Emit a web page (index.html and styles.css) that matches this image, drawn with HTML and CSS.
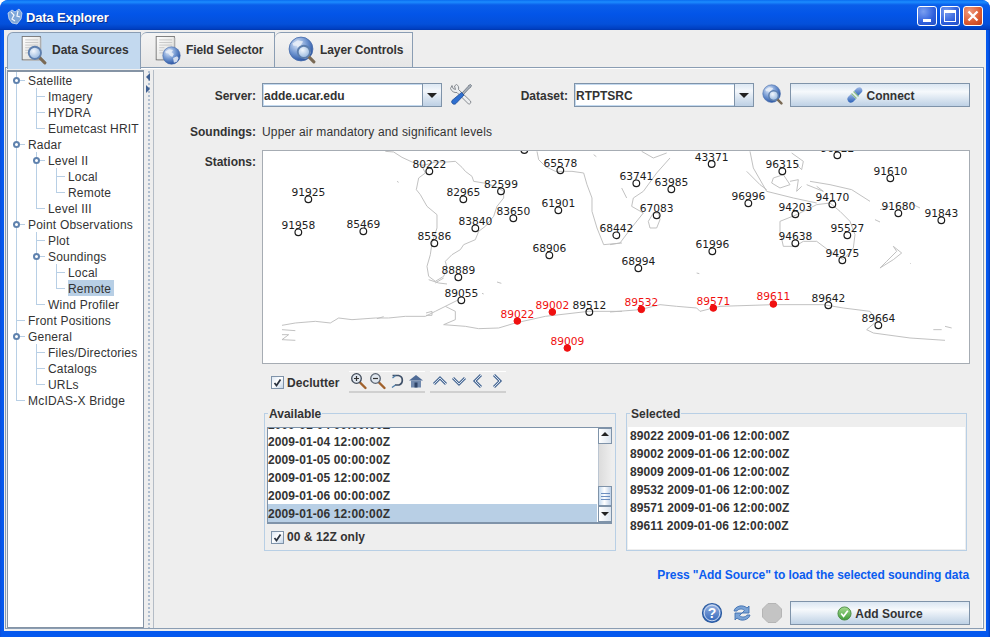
FILE: index.html
```html
<!DOCTYPE html>
<html lang="en">
<head>
<meta charset="utf-8">
<title>Data Explorer</title>
<link rel="stylesheet" href="styles.css">
</head>
<body>
<svg class="defs" width="0" height="0" aria-hidden="true">
  <defs>
    <radialGradient id="globe" cx="35%" cy="30%" r="75%">
      <stop offset="0" stop-color="#dfeafa"/><stop offset=".55" stop-color="#6d93cf"/><stop offset="1" stop-color="#244f9e"/>
    </radialGradient>
    <radialGradient id="lens" cx="40%" cy="35%" r="70%">
      <stop offset="0" stop-color="#f2f7fd"/><stop offset="1" stop-color="#8fb2dc"/>
    </radialGradient>
    <linearGradient id="paper" x1="0" y1="0" x2="1" y2="1">
      <stop offset="0" stop-color="#ffffff"/><stop offset="1" stop-color="#d8d8d4"/>
    </linearGradient>
    <linearGradient id="blueBtn" x1="0" y1="0" x2="0" y2="1">
      <stop offset="0" stop-color="#9db7e4"/><stop offset="1" stop-color="#2c62b8"/>
    </linearGradient>
    <linearGradient id="greenBtn" x1="0" y1="0" x2="0" y2="1">
      <stop offset="0" stop-color="#a7dc91"/><stop offset="1" stop-color="#3f9c3a"/>
    </linearGradient>
    <symbol id="i-doc" viewBox="0 0 30 32">
      <rect x="2.5" y="1.5" width="21" height="27" fill="url(#paper)" stroke="#6f6f6f"/>
      <path d="M24 3v26H4" fill="none" stroke="#b9b9b9" stroke-width="1.4"/>
      <path d="M6 5.5h15M6 8.500h15M6 11.500h15M6 14.500h6M6 17.500h5M6 20.500h5" stroke="#c4c4c4"/>
    </symbol>
    <symbol id="i-glass" viewBox="0 0 14 14">
      <path d="M8.500 8.500l4 4" stroke="#7a6a55" stroke-width="2.200" stroke-linecap="round"/>
      <circle cx="5.500" cy="5.500" r="4.300" fill="url(#lens)" stroke="#5d7fae" stroke-width="1.300"/>
    </symbol>
    <symbol id="i-globe" viewBox="0 0 24 24">
      <circle cx="12" cy="12" r="11" fill="url(#globe)" stroke="#4a6fae" stroke-width=".8"/>
      <path d="M4 7l5-3 5 1-2 3 3 2-2 4-3-2-2-3-3 0zM14 15l5-2 2 2-2 5-4 1z" fill="#e9eff8" opacity=".85"/>
    </symbol>
    <symbol id="i-chev-up" viewBox="0 0 18 18"><path class="chev-o" d="M3 12l6-6 6 6"/><path class="chev-i" d="M3 12l6-6 6 6"/></symbol>
    <symbol id="i-chev-down" viewBox="0 0 18 18"><path class="chev-o" d="M3 6l6 6 6-6"/><path class="chev-i" d="M3 6l6 6 6-6"/></symbol>
    <symbol id="i-chev-left" viewBox="0 0 18 18"><path class="chev-o" d="M12 3L6 9l6 6"/><path class="chev-i" d="M12 3L6 9l6 6"/></symbol>
    <symbol id="i-chev-right" viewBox="0 0 18 18"><path class="chev-o" d="M6 3l6 6-6 6"/><path class="chev-i" d="M6 3l6 6-6 6"/></symbol>
  </defs>
</svg>

<div class="window">
  <header class="titlebar">
    <svg class="app-icon" viewBox="0 0 18 18" width="18" height="18" aria-hidden="true">
      <path d="M2 5l4-3 3 2 4-3 3 4-1 6-4 5-5-1-3-4z" fill="#7ea6d8" stroke="#dfe9f7" stroke-width=".7"/>
      <path d="M5 4l3 3-2 4 3 2M12 3l-1 5 3 1" fill="none" stroke="#f4f7fc" stroke-width="1.200"/>
    </svg>
    <span class="title-text">Data Explorer</span>
    <div class="win-btns">
      <span class="win-btn"><i class="glyph-min"></i></span>
      <span class="win-btn"><i class="glyph-max"></i></span>
      <span class="win-btn close">
        <svg viewBox="0 0 12 12" width="12" height="12" aria-hidden="true"><path d="M1.500 1.500l9 9M10.500 1.500l-9 9" stroke="#fff" stroke-width="2.300"/></svg>
      </span>
    </div>
  </header>

  <div class="client">
    <nav class="tabs">
      <div class="tab active">
        <svg class="tab-icon" viewBox="0 0 28 30" width="28" height="30" aria-hidden="true">
          <use href="#i-doc" x="0" y="0" width="26" height="28"/>
          <use href="#i-glass" x="7" y="10" width="20" height="20"/>
        </svg>
        <span>Data Sources</span>
      </div>
      <div class="tab">
        <svg class="tab-icon" viewBox="0 0 28 30" width="28" height="30" aria-hidden="true">
          <use href="#i-doc" x="0" y="0" width="26" height="28"/>
          <use href="#i-globe" x="8" y="11" width="19" height="19"/>
        </svg>
        <span>Field Selector</span>
      </div>
      <div class="tab wide">
        <svg class="tab-icon" viewBox="0 0 28 30" width="28" height="30" aria-hidden="true">
          <use href="#i-globe" x="0" y="1" width="26" height="26"/>
          <use href="#i-glass" x="8" y="9" width="20" height="20"/>
        </svg>
        <span>Layer Controls</span>
      </div>
    </nav>

    <div class="tab-pane">
      <aside class="tree">
        <ul class="tree-root">
          <li class="open"><span class="node">Satellite</span>
            <ul>
              <li><span class="node">Imagery</span></li>
              <li><span class="node">HYDRA</span></li>
              <li><span class="node">Eumetcast HRIT</span></li>
            </ul>
          </li>
          <li class="open"><span class="node">Radar</span>
            <ul>
              <li class="open"><span class="node">Level II</span>
                <ul>
                  <li><span class="node">Local</span></li>
                  <li><span class="node">Remote</span></li>
                </ul>
              </li>
              <li><span class="node">Level III</span></li>
            </ul>
          </li>
          <li class="open"><span class="node">Point Observations</span>
            <ul>
              <li><span class="node">Plot</span></li>
              <li class="open"><span class="node">Soundings</span>
                <ul>
                  <li><span class="node">Local</span></li>
                  <li><span class="node selected">Remote</span></li>
                </ul>
              </li>
              <li><span class="node">Wind Profiler</span></li>
            </ul>
          </li>
          <li><span class="node">Front Positions</span></li>
          <li class="open"><span class="node">General</span>
            <ul>
              <li><span class="node">Files/Directories</span></li>
              <li><span class="node">Catalogs</span></li>
              <li><span class="node">URLs</span></li>
            </ul>
          </li>
          <li><span class="node">McIDAS-X Bridge</span></li>
        </ul>
      </aside>

      <div class="splitter">
        <i class="tri-left"></i>
        <i class="tri-right"></i>
      </div>

      <main class="panel">
        <div class="row-top">
          <label class="label">Server:</label>
          <div class="combo"><span class="combo-text">adde.ucar.edu</span><span class="combo-arrow"></span></div>
          <svg class="ic-wrench" viewBox="0 0 23 24" width="23" height="24" aria-hidden="true">
            <path d="M1.500 5.500L3 2.500l1 3 2.500 1L5.500 3l2-1.500c2 1 2.500 3 2 5L21.500 18c1 1.500-.5 3.500-2 3L8 9.500c-2.500.5-5.500-1-6.500-4z" fill="#eceef0" stroke="#7a7f86" stroke-width=".9"/>
            <path d="M21.500 1.500l1 1-1 2-1 .5L14 12l-1.500-1.500L19 3.500l.5-1z" fill="#aab2bc" stroke="#5a6470" stroke-width=".7"/>
            <path d="M12.500 9.500l2.500 2.500-8 8.500c-2 2-5.500-.5-4-3z" fill="#2f6fd0" stroke="#1d4b94" stroke-width=".8"/>
          </svg>
          <label class="label label-dataset">Dataset:</label>
          <div class="combo"><span class="combo-text">RTPTSRC</span><span class="combo-arrow"></span></div>
          <svg class="ic-search" viewBox="0 0 24 24" width="22" height="22" aria-hidden="true">
            <use href="#i-globe" x="0" y="0" width="21" height="21"/>
            <use href="#i-glass" x="6" y="6" width="17" height="17"/>
          </svg>
          <button class="btn btn-connect" type="button">
            <svg viewBox="0 0 18 18" width="18" height="18" aria-hidden="true">
              <path d="M2 11l3-3 5 5-3 3c-2 1-4 1-5-1s-1-2 0-4z" fill="url(#blueBtn)"/>
              <path d="M8 5l3-3c2-1 4-1 5 1s0 3-1 4l-3 3z" fill="url(#blueBtn)"/>
              <path d="M5.500 7.500l5 5M7.500 5.500l5 5" stroke="#8fbf8a" stroke-width="1.200"/>
            </svg>
            <span>Connect</span>
          </button>
        </div>

        <div class="row-text">
          <span class="label">Soundings:</span>
          <span class="plain">Upper air mandatory and significant levels</span>
        </div>

        <div class="row-map">
          <span class="label label-top">Stations:</span>
          <div class="map">
            <svg viewBox="263 151 706 212" width="706" height="212" aria-label="Station map">
              <g transform="translate(262 148) scale(.33333)">
                <path class="coast" d="M370 10L395 12L420 28L450 42L480 52L500 48L520 42L555 42L580 40L600 58L610 70L630 85L635 100L665 105L700 115L725 130L725 150L705 175L695 205L670 235L650 250L640 275L605 290L595 305L570 320L550 340L555 360L545 385L520 400L500 385L495 355L505 320L510 285L525 240L525 200L495 175L475 140L463 125L470 90L490 75L480 55"/>
                <path class="coast" d="M500 395L530 405L555 408M545 390L520 405"/>
                <path class="coast" d="M60 532L100 525L160 520L205 525L230 510L270 515L340 510L380 510L430 505L490 505L520 490L550 475L590 455M550 475L580 490L580 515L545 530L610 535L650 542L710 540L760 525L850 505L980 490L1080 490"/>
                <path class="coast" d="M60 545L100 548M60 560L80 560L60 575L100 577M492 495L510 490L510 502L492 502M345 512L365 506"/>
                <path class="coast" d="M825 10L830 35L850 55L880 70L930 70L965 75L975 110L990 150L990 190L1005 240L1025 290L1080 285"/>
                <path class="coast" d="M995 20L1003 26M705 402L718 406M405 100L410 103M660 436L665 438"/>
              </g>
              <g transform="translate(610 148) scale(.33333)">
                <path class="coast" d="M95 10L130 30L170 15M180 30L140 75L100 130L70 150L65 175L100 195L60 245L30 285L0 290"/>
                <path class="coast" d="M130 195L145 195L150 215L140 240L120 240L115 220ZM35 120L50 150"/>
                <path class="coast" d="M420 10L430 60L470 130L550 150L620 165M410 70L450 110L470 125M490 90L520 80L540 110L510 120L485 105ZM540 100L565 95L560 130L575 115M545 15L580 40L575 65L550 40M600 100L660 110L725 125L780 160M590 110L640 130L620 115"/>
                <path class="coast" d="M510 220L560 200L620 170L660 165L690 190L720 220L735 260L730 300L700 335L660 310L620 280L580 280L555 295L520 295L510 250Z"/>
                <path class="coast" d="M850 295L875 315L850 335L810 360L830 340L860 310ZM795 215L810 222M810 185L840 175M900 165L930 180M260 375L268 377M900 345L902 347"/>
                <path class="coast" d="M0 492L90 485L150 470L200 475L260 480L270 490L330 475L490 470L640 470L700 480L780 490L800 520L770 545L790 555L900 570L1005 577M970 545L995 545M1005 535L1025 540"/>
              </g>
              <g class="stations" transform="translate(262 148) scale(.33333)">
                <circle cx="787" cy="6" r="10"/>
                <circle cx="502" cy="70" r="10"/><text x="502" y="60">80222</text>
                <circle cx="895" cy="67" r="10"/><text x="895" y="57">65578</text>
                <circle cx="139" cy="154" r="10"/><text x="139" y="144">91925</text>
                <circle cx="604" cy="154" r="10"/><text x="604" y="144">82965</text>
                <circle cx="717" cy="130" r="10"/><text x="717" y="119">82599</text>
                <circle cx="889" cy="187" r="10"/><text x="889" y="176">61901</text>
                <circle cx="754" cy="211" r="10"/><text x="754" y="200">83650</text>
                <circle cx="640" cy="241" r="10"/><text x="640" y="230">83840</text>
                <circle cx="109" cy="253" r="10"/><text x="109" y="243">91958</text>
                <circle cx="304" cy="250" r="10"/><text x="304" y="239">85469</text>
                <circle cx="517" cy="286" r="10"/><text x="517" y="275">85586</text>
                <circle cx="862" cy="322" r="10"/><text x="862" y="311">68906</text>
                <circle cx="589" cy="388" r="10"/><text x="589" y="377">88889</text>
                <circle cx="598" cy="457" r="10"/><text x="598" y="446">89055</text>
                <circle cx="982" cy="492" r="10"/><text x="982" y="482">89512</text>
              </g>
              <g class="stations" transform="translate(610 148) scale(.33333)">
                <circle cx="682" cy="22" r="10"/><text x="682" y="12">96522</text>
                <circle cx="305" cy="48" r="10"/><text x="305" y="39">43371</text>
                <circle cx="79" cy="106" r="10"/><text x="79" y="96">63741</text>
                <circle cx="184" cy="124" r="10"/><text x="184" y="114">63985</text>
                <circle cx="517" cy="70" r="10"/><text x="517" y="59">96315</text>
                <circle cx="841" cy="91" r="10"/><text x="841" y="80">91610</text>
                <circle cx="415" cy="166" r="10"/><text x="415" y="156">96996</text>
                <circle cx="667" cy="169" r="10"/><text x="667" y="159">94170</text>
                <circle cx="556" cy="199" r="10"/><text x="556" y="188">94203</text>
                <circle cx="865" cy="196" r="10"/><text x="865" y="186">91680</text>
                <circle cx="994" cy="217" r="10"/><text x="994" y="206">91843</text>
                <circle cx="140" cy="202" r="10"/><text x="140" y="191">67083</text>
                <circle cx="19" cy="262" r="10"/><text x="19" y="251">68442</text>
                <circle cx="712" cy="262" r="10"/><text x="712" y="251">95527</text>
                <circle cx="556" cy="286" r="10"/><text x="556" y="275">94638</text>
                <circle cx="307" cy="310" r="10"/><text x="307" y="299">61996</text>
                <circle cx="697" cy="337" r="10"/><text x="697" y="326">94975</text>
                <circle cx="85" cy="361" r="10"/><text x="85" y="350">68994</text>
                <circle cx="655" cy="472" r="10"/><text x="655" y="461">89642</text>
                <circle cx="805" cy="532" r="10"/><text x="805" y="521">89664</text>
              </g>
              <g class="stations picked" transform="translate(262 148) scale(.33333)">
                <circle cx="871" cy="492" r="10"/><text x="871" y="482">89002</text>
                <circle cx="766" cy="519" r="10"/><text x="766" y="509">89022</text>
                <circle cx="916" cy="600" r="10"/><text x="916" y="590">89009</text>
              </g>
              <g class="stations picked" transform="translate(610 148) scale(.33333)">
                <circle cx="94" cy="484" r="10"/><text x="94" y="473">89532</text>
                <circle cx="310" cy="480" r="10"/><text x="310" y="470">89571</text>
                <circle cx="490" cy="468" r="10"/><text x="490" y="457">89611</text>
              </g>
            </svg>
          </div>
        </div>

        <div class="lower">
          <div class="row-tools">
            <label class="check">
              <span class="box"><svg viewBox="0 0 11 11" width="11" height="11" aria-hidden="true"><path d="M2.500 6l2 2.500L8.500 2.500" fill="none" stroke="#2c3440" stroke-width="1.800"/></svg></span>
              <span class="check-text">Declutter</span>
            </label>
            <div class="toolgroup">
              <span class="tool"><svg viewBox="0 0 18 18" width="18" height="18" aria-hidden="true"><path d="M9.500 10l6 6" stroke="#a0612c" stroke-width="2.400" stroke-linecap="round"/><circle cx="6.500" cy="6.500" r="4.800" fill="#dfe6ee" stroke="#404a58" stroke-width="1.300"/><path d="M4 6.500h5M6.500 4v5" stroke="#333" stroke-width="1.200"/></svg></span>
              <span class="tool"><svg viewBox="0 0 18 18" width="18" height="18" aria-hidden="true"><path d="M9.500 10l6 6" stroke="#a0612c" stroke-width="2.400" stroke-linecap="round"/><circle cx="6.500" cy="6.500" r="4.800" fill="#dfe6ee" stroke="#5a6472" stroke-width="1.300"/><path d="M4 6.500h5" stroke="#333" stroke-width="1.200"/></svg></span>
              <span class="tool"><svg viewBox="0 0 18 18" width="18" height="18" aria-hidden="true"><path d="M4.500 3.500h6c5 1 5 8 .5 9.500H7" fill="none" stroke="#3f5068" stroke-width="1.700"/><path d="M7.500 3.500L4.500 6M7.500 13L4 15.500" fill="none" stroke="#4f7ea8" stroke-width="1.400"/></svg></span>
              <span class="tool"><svg viewBox="0 0 18 18" width="18" height="18" aria-hidden="true"><path d="M2 8.500L9 3l7 5.500z" fill="#4f6b96"/><rect x="4" y="8.500" width="10" height="7" fill="#7189ad"/><rect x="7.500" y="10.500" width="3" height="5" fill="#2f4468"/></svg></span>
            </div>
            <div class="toolgroup">
              <span class="tool"><svg width="18" height="18" aria-hidden="true"><use href="#i-chev-up"/></svg></span>
              <span class="tool"><svg width="18" height="18" aria-hidden="true"><use href="#i-chev-down"/></svg></span>
              <span class="tool"><svg width="18" height="18" aria-hidden="true"><use href="#i-chev-left"/></svg></span>
              <span class="tool"><svg width="18" height="18" aria-hidden="true"><use href="#i-chev-right"/></svg></span>
            </div>
          </div>

          <div class="groups">
            <section class="group group-avail">
              <span class="legend">Available</span>
              <div class="listwrap">
                <div class="list">
                  <div class="list-row">2009-01-04 00:00:00Z</div>
                  <div class="list-row">2009-01-04 12:00:00Z</div>
                  <div class="list-row">2009-01-05 00:00:00Z</div>
                  <div class="list-row">2009-01-05 12:00:00Z</div>
                  <div class="list-row">2009-01-06 00:00:00Z</div>
                  <div class="list-row selected">2009-01-06 12:00:00Z</div>
                </div>
                <div class="scrollbar">
                  <span class="sb-btn"><i class="arrow-up"></i></span>
                  <span class="sb-track"></span>
                  <span class="sb-thumb"><i></i></span>
                  <span class="sb-btn"><i class="arrow-down"></i></span>
                </div>
              </div>
              <label class="check check-only">
                <span class="box"><svg viewBox="0 0 11 11" width="11" height="11" aria-hidden="true"><path d="M2.500 6l2 2.500L8.500 2.500" fill="none" stroke="#2c3440" stroke-width="1.800"/></svg></span>
                <span class="check-text">00 &amp; 12Z only</span>
              </label>
            </section>
            <section class="group group-sel">
              <span class="legend">Selected</span>
              <div class="sel-list">
                <div class="list-row">89022 2009-01-06 12:00:00Z</div>
                <div class="list-row">89002 2009-01-06 12:00:00Z</div>
                <div class="list-row">89009 2009-01-06 12:00:00Z</div>
                <div class="list-row">89532 2009-01-06 12:00:00Z</div>
                <div class="list-row">89571 2009-01-06 12:00:00Z</div>
                <div class="list-row">89611 2009-01-06 12:00:00Z</div>
              </div>
            </section>
          </div>

          <p class="hint">Press "Add Source" to load the selected sounding data</p>

          <div class="row-bottom">
            <svg class="round-ic" viewBox="0 0 22 22" width="22" height="22" aria-hidden="true">
              <circle cx="11" cy="11" r="9.500" fill="url(#blueBtn)" stroke="#2a5a9f" stroke-width="1.200"/>
              <circle cx="11" cy="11" r="7.800" fill="none" stroke="#d5e1f3" stroke-width=".9"/>
              <text class="q-mark" x="11" y="15.500">?</text>
            </svg>
            <svg class="round-ic" viewBox="0 0 22 22" width="22" height="22" aria-hidden="true">
              <path d="M3 9c1-5 9-7 13-3l2-2v7h-7l2.500-2.500C11 6 7 7 6 9z" fill="#7aa3d6" stroke="#3f6fb0" stroke-width=".9"/>
              <path d="M19 13c-1 5-9 7-13 3l-2 2v-7h7l-2.500 2.500c2.500 2.500 6.500 1.500 7.500-.5z" fill="#7aa3d6" stroke="#3f6fb0" stroke-width=".9"/>
            </svg>
            <svg class="round-ic" viewBox="0 0 22 22" width="22" height="22" aria-hidden="true">
              <path d="M7 1.500h8L20.500 7v8L15 20.500H7L1.500 15V7z" fill="#c4c4c4" stroke="#b5b5b5"/>
            </svg>
            <button class="btn btn-add" type="button">
              <svg viewBox="0 0 16 16" width="15" height="15" aria-hidden="true">
                <circle cx="8" cy="8" r="7" fill="url(#greenBtn)" stroke="#4d8d47"/>
                <path d="M4.500 8l2.500 3L11.500 5" fill="none" stroke="#fff" stroke-width="1.800"/>
              </svg>
              <span>Add Source</span>
            </button>
          </div>
        </div>
      </main>
    </div>
  </div>
</div>
</body>
</html>
```

FILE: styles.css
```css
* { box-sizing: border-box; }
html, body { margin: 0; padding: 0; background: #fff; }
body { width: 990px; height: 637px; overflow: hidden; font: 12px "Liberation Sans", Arial, sans-serif; color: #333; }
.defs { position: absolute; }

.window {
  width: 990px; height: 637px; display: flex; flex-direction: column;
  border-radius: 8px 8px 0 0; overflow: hidden;
  background: linear-gradient(90deg, #0a4fdc 0, #0558ee 2px, #0558ee 988px, #003dc0 100%);
  padding: 0 4px 6px;
}
.titlebar {
  flex: none; height: 30px; margin: 0 -4px; padding: 2px 7px 0 6px;
  display: flex; align-items: center;
  background: linear-gradient(#0a6cf0 0, #1c8cff 2px, #0a5eea 5px, #0355e8 14px, #0450da 24px, #003ec0 29px, #0035a8 30px);
  border-radius: 8px 8px 0 0;
}
.app-icon { flex: none; margin-right: 2px; margin-top: 1px; }
.title-text { color: #fff; font-weight: bold; font-size: 13px; letter-spacing: -.15px; text-shadow: 1px 1px 0 #0a2f8c; margin-top: 2px; }
.win-btns { margin-left: auto; display: flex; gap: 3px; }
.win-btn {
  width: 20px; height: 20px; border: 1px solid #fff; border-radius: 3px;
  display: flex; align-items: center; justify-content: center; position: relative;
  background: radial-gradient(circle at 30% 25%, #7b9ff0, #2e5fdc 60%, #2450c4);
}
.win-btn.close { background: radial-gradient(circle at 30% 25%, #ed9a7e, #dc5a30 60%, #c23d1a); }
.glyph-min { width: 8px; height: 3px; background: #fff; position: absolute; left: 5px; bottom: 3px; }
.glyph-max { width: 12px; height: 12px; border: 1px solid #fff; border-top-width: 3px; }

.client { flex: 1; min-height: 0; background: #eee; display: flex; flex-direction: column; padding-right: 2px; }
.tabs { flex: none; height: 37px; padding: 2px 0 0 3px; display: flex; align-items: flex-start; position: relative; z-index: 1; }
.tab {
  width: 134px; height: 35px; display: flex; align-items: center; gap: 4px; padding-left: 13px;
  background: linear-gradient(#f4f4f4, #e6e6e6);
  border: 1px solid #8a9db3; border-left-width: 0; border-bottom-width: 0; border-radius: 6px 0 0 0;
  font-weight: bold; color: #333; letter-spacing: -.1px;
}
.tab:first-child { border-left-width: 1px; }
.tab.wide { width: 138px; padding-left: 13px; }
.tab.active { background: #c3d9ef; height: 37px; padding: 0 0 2px 12px; letter-spacing: 0; }
.tab-icon { flex: none; }

.tab-pane {
  flex: 1; min-height: 0; display: flex;
  border: 1px solid #8a9db3;
  margin: 0 0 2px 1px; padding: 2px 0 0 1px;
  box-shadow: inset 0 1px 0 #fff, inset -1px 0 0 #fff;
}

.tree {
  flex: none; width: 137px; background: #fff;
  border: 1px solid #8594a5; border-top-width: 2px;
  font-size: 12px; letter-spacing: .2px;
}
.tree ul { list-style: none; margin: 0; padding: 0; }
.tree li { position: relative; padding-left: 20px; }
.tree li::before { content: ""; position: absolute; left: 8px; top: 8px; width: 9px; height: 1px; background: #b8cfe5; }
.tree li::after { content: ""; position: absolute; left: 8px; top: 0; width: 1px; height: 100%; background: #b8cfe5; }
.tree li:last-child::after { height: 9px; }
.tree li.open > .node::before {
  content: ""; position: absolute; left: 5px; top: 5px; width: 3px; height: 3px; border-radius: 50%;
  border: 2px solid #5f82ae; background: #fff; z-index: 1;
}
.node { display: block; height: 16px; line-height: 16px; padding-top: 1px; white-space: nowrap; }
.node.selected { display: inline-block; background: #b8cfe5; padding-right: 3px; vertical-align: top; }

.splitter { flex: none; width: 10px; position: relative; border-right: 1px solid #b4bcc6;
  background: radial-gradient(circle, #8ba3bf 0 .6px, transparent .9px) 3px 0 / 4px 4px repeat-y; }
.tri-left, .tri-right { position: absolute; width: 0; height: 0; border: 4px solid transparent; }
.tri-left { top: 3px; left: -2px; border-right-color: #3f6092; }
.tri-right { top: 15px; left: 2px; border-left-color: #3f6092; }

.panel { flex: 1; min-width: 0; padding-top: 13px; }
.label { flex: none; width: 102px; text-align: right; font-weight: bold; color: #333; }
.row-top { display: flex; align-items: center; height: 24px; }
.row-top .label { padding-top: 2px; }
.combo {
  flex: none; width: 180px; height: 24px; margin-left: 6px; display: flex;
  border: 1px solid #7f93a9; background: #fff;
  box-shadow: inset 0 0 0 1px #c3d9ef;
}
.combo-text { flex: 1; font-weight: bold; padding: 5px 0 0 1px; line-height: 15px; }
.combo-arrow {
  width: 19px; border-left: 1px solid #7f93a9; position: relative;
  background: linear-gradient(#dde8f3, #f4f7fb 30%, #bdd0e4);
}
.combo-arrow::after { content: ""; position: absolute; left: 4px; top: 9px; border: 5px solid transparent; border-top: 5px solid #222; border-bottom: 0; }
.ic-wrench { flex: none; margin-left: 7px; }
.label-dataset { width: 96px; }
.ic-search { flex: none; margin-left: 8px; }
.btn {
  flex: none; width: 180px; height: 24px; display: flex; align-items: center; justify-content: center; gap: 3px;
  border: 1px solid #7f93a9; padding: 0;
  background: linear-gradient(#dbe6f2, #f6f9fc 35%, #bed1e5);
  font: bold 12px "Liberation Sans", Arial, sans-serif; color: #333;
}
.btn span { padding-top: 2px; }
.btn-connect { margin-left: 6px; }
.row-text { display: flex; align-items: center; height: 16px; margin-top: 17px; }
.plain { margin-left: 6px; letter-spacing: .16px; }
.row-map { display: flex; margin-top: 10px; }
.label-top { padding-top: 5px; }
.map { flex: none; margin-left: 6px; width: 708px; height: 214px; background: #fff; border: 1px solid #a6acb3; overflow: hidden; }
.map svg { display: block; }
.coast { fill: none; stroke: #bcbcbc; stroke-width: 2.8; }
.stations circle { fill: none; stroke: #1c1c1c; stroke-width: 3.6; }
.stations text { font: 32px "DejaVu Sans", sans-serif; fill: #1c1c1c; text-anchor: middle; }
.picked circle { fill: #f01010; stroke: #f01010; stroke-width: 3; }
.picked text { fill: #f01010; }
.chev-o { fill: none; stroke: #4f6e98; stroke-width: 3; }
.chev-i { fill: none; stroke: #d5dfec; stroke-width: 1; }

.lower { margin-left: 108px; }
.row-tools { display: flex; align-items: center; height: 22px; margin-top: 7px; padding-left: 9px; }
.check { display: flex; align-items: center; gap: 3px; font-weight: bold; }
.box { width: 13px; height: 13px; border: 1px solid #7f93a9; background: linear-gradient(135deg, #dbe6f2, #fff 45%, #c3d5e8); display: flex; align-items: center; justify-content: center; }
.check-text { letter-spacing: .05px; }
.row-tools .check { width: 78px; }
.row-tools .check-text { padding-top: 2px; }
.toolgroup { display: flex; width: 76px; height: 22px; padding-left: 1px; margin-right: 5px; border-top: 1px solid #fff; border-bottom: 2px solid #d0d0d0; background: #eee; }
.tool { width: 19px; height: 18px; display: flex; align-items: center; justify-content: center; }

.groups { display: flex; margin: 20px 0 0 2px; gap: 10px; }
.group { position: relative; height: 138px; border: 1px solid #b8cfe5; }
.legend { position: absolute; left: 3px; top: -7px; padding: 0 1px; background: #eee; font-weight: bold; line-height: 14px; }
.group-avail { width: 352px; padding: 13px 3px 0 2px; }
.group-sel { width: 341px; padding: 13px 1px 0 1px; }
.listwrap { display: flex; height: 97px; border: 1px solid #7f93a9; border-right: 0; background: #fff; border-bottom: 2px solid #7f93a9; }
.list { flex: 1; overflow: hidden; }
.list-row { height: 18px; line-height: 18px; font-weight: bold; padding-left: 0; letter-spacing: .1px; }
.list .list-row { line-height: 20px; }
.list .list-row:first-child { margin-top: -14px; line-height: 23px; }
.list-row.selected { background: #b8cfe5; }
.scrollbar { flex: none; width: 15px; display: flex; flex-direction: column; border-left: 1px solid #fff; }
.sb-btn { flex: none; height: 16px; border: 1px solid #7f93a9; background: linear-gradient(90deg, #fff, #dbe4ee); position: relative; }
.sb-track { flex: 1; background: linear-gradient(90deg, #dcdcdc, #eee); border-left: 1px solid #bcc6d2; }
.sb-thumb { flex: none; height: 20px; border: 1px solid #7f93a9; background: linear-gradient(90deg, #c3d9ef, #fff 45%, #bdd0e8); display: flex; align-items: center; justify-content: center; }
.sb-thumb i { width: 9px; height: 7px; border-top: 1px solid #6d8fc0; border-bottom: 1px solid #6d8fc0; background: linear-gradient(#6d8fc0, #6d8fc0) center / 100% 1px no-repeat; }
.arrow-up, .arrow-down { position: absolute; left: 2px; width: 0; height: 0; border: 4.500px solid transparent; }
.arrow-up { top: 3px; border-bottom-color: #222; border-top: 0; }
.arrow-down { top: 5px; border-top-color: #222; border-bottom: 0; }
.check-only { margin: 5px 0 0 4px; height: 16px; }
.sel-list { background: #fff; height: 122px; padding-left: 1px; }
.sel-list .list-row { padding-left: 1px; }

.hint { margin: 16px 0 0 0; height: 16px; line-height: 16px; text-align: right; color: #0a5cf0; font-weight: bold; width: 707px; letter-spacing: -.07px; }
.row-bottom { display: flex; align-items: center; justify-content: flex-end; width: 708px; height: 24px; margin-top: 18px; gap: 8px; }
.round-ic { flex: none; }
.q-mark { font: bold 14px "Liberation Sans", Arial, sans-serif; fill: #fff; text-anchor: middle; }
.btn-add { margin-left: -1px; }
```
